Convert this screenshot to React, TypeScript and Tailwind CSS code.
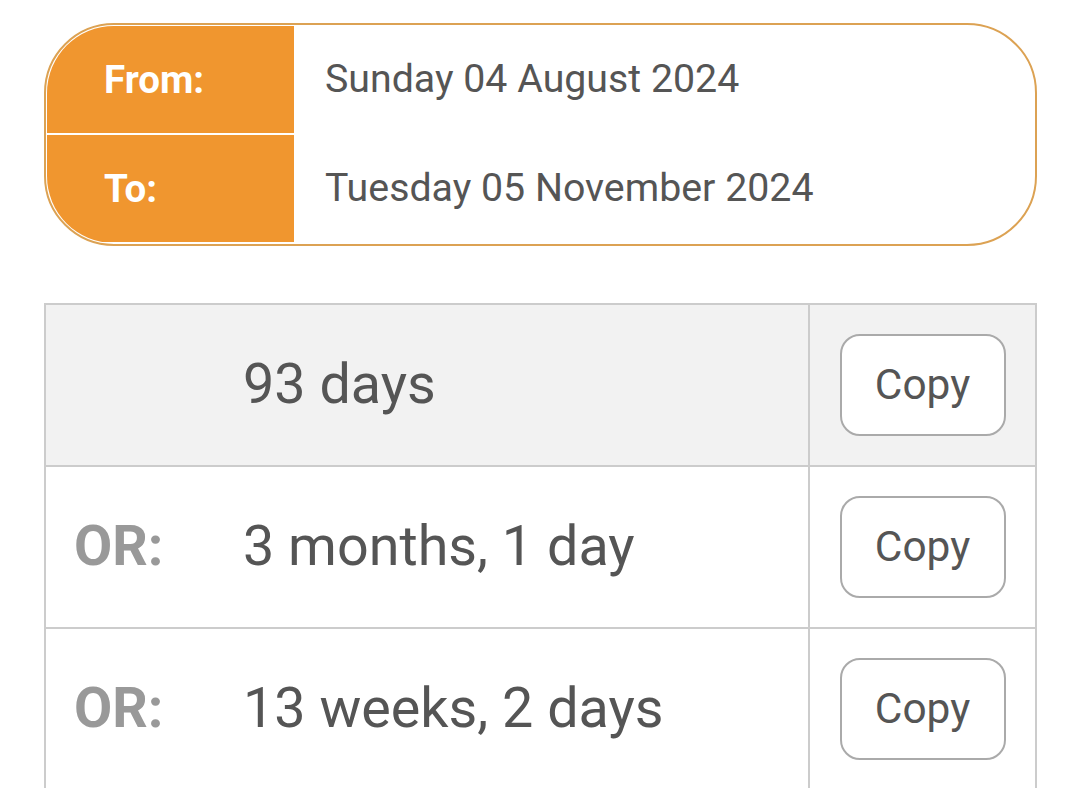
const rows = [
  { label: "", value: "93 days", shaded: true },
  { label: "OR:", value: "3 months, 1 day", shaded: false },
  { label: "OR:", value: "13 weeks, 2 days", shaded: false },
];

const DateRow = ({ label, value }: { label: string; value: string }) => (
  <div className="flex h-[107px]">
    <div className="flex w-[247px] items-center bg-[#f0962f] pl-[57px] text-[38.5px] font-bold text-white">
      {label}
    </div>
    <div className="flex flex-1 items-center pl-[31px] text-[39.3px] text-[#555]">
      {value}
    </div>
  </div>
);

export default function App() {
  return (
    <div className="min-h-screen bg-white px-[44px] pt-[23px] font-['Roboto',sans-serif]">
      <div className="h-[223px] w-[993px] rounded-[70px] border-2 border-[#dca253] p-px">
        <div className="flex h-full flex-col overflow-hidden rounded-[67px]">
          <DateRow label="From:" value="Sunday 04 August 2024" />
          <div className="flex h-[2px]">
            <div className="w-[247px] bg-white" />
          </div>
          <DateRow label="To:" value="Tuesday 05 November 2024" />
        </div>
      </div>

      <div className="mt-[57px] w-[993px] border-2 border-b-0 border-[#cccccc]">
        {rows.map((row, i) => (
          <div
            key={i}
            className={`flex h-[162px] border-b-2 border-[#cccccc] ${row.shaded ? "bg-[#f2f2f2]" : "bg-white"}`}
          >
            <div className="flex w-[167px] items-center pl-[28px] text-[55.5px] font-bold text-[#999]">
              {row.label}
            </div>
            <div className="flex flex-1 items-center pl-[30px] text-[55.7px] text-[#555]">
              {row.value}
            </div>
            <div className="flex w-[227px] items-center justify-center border-l-2 border-[#cccccc]">
              <button className="h-[102px] w-[166px] rounded-[20px] border-2 border-[#aaaaaa] bg-white text-[42.4px] text-[#555]">
                Copy
              </button>
            </div>
          </div>
        ))}
      </div>
    </div>
  );
}
